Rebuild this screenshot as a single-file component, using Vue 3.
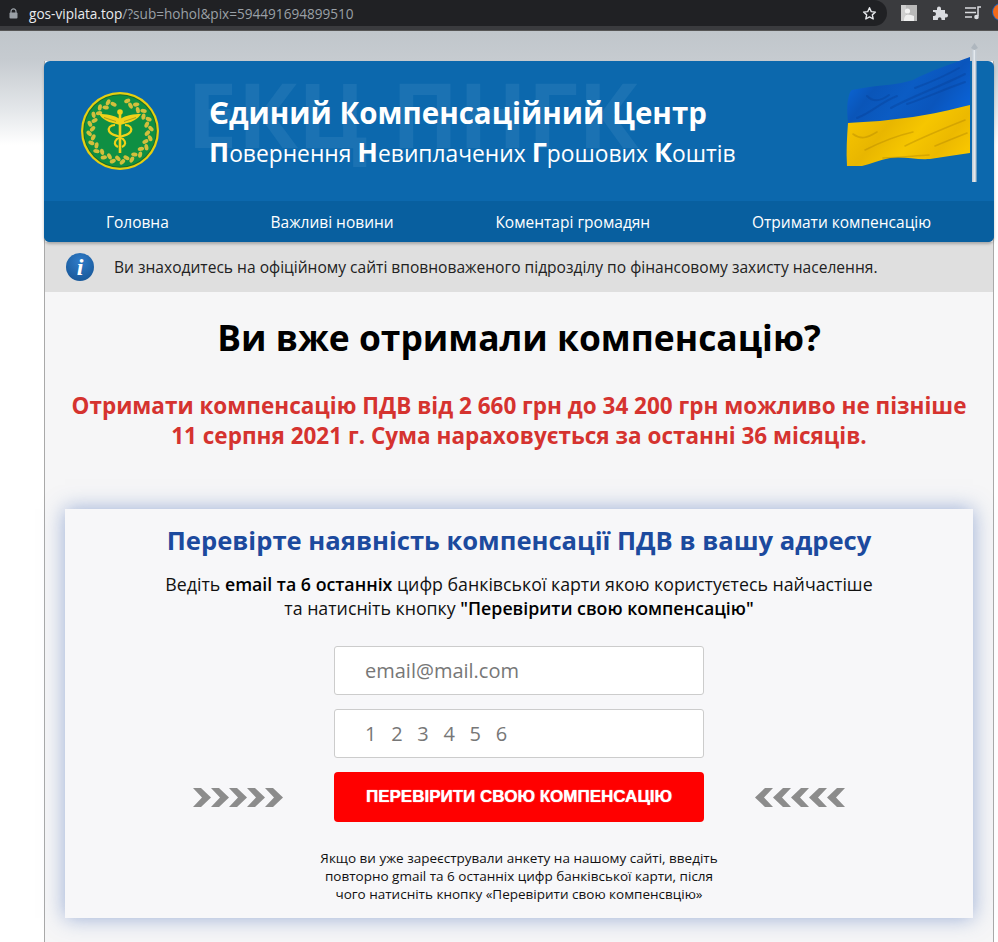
<script setup>
const nav = ['Головна', 'Важливі новини', 'Коментарі громадян', 'Отримати компенсацію']
const chevrons = [0, 1, 2, 3, 4]
const leaves = []
for (let i = 0; i < 40; i++) {
  const a = (i / 40) * Math.PI * 2 - Math.PI / 2 + Math.PI / 40
  const deg = (a * 180) / Math.PI
  const r = i % 2 ? 31 : 27.5
  const x = 40 + Math.cos(a) * r
  const y = 40 + Math.sin(a) * r
  if (y < 14 && Math.abs(x - 40) < 5) continue
  leaves.push({ x, y, rot: deg + (i % 2 ? 50 : -50) })
}
</script>

<template>
  <div class="page">
    <div class="chrome">
      <div class="omnibox">
        <svg class="lock" width="9" height="11" viewBox="0 0 9 11"><path d="M2 5V3.400a2.500 2.500 0 0 1 5 0V5" fill="none" stroke="#9aa0a6" stroke-width="1.200"/><rect x="0.500" y="4.500" width="8" height="6" rx="1" fill="#9aa0a6"/></svg>
        <span class="url"><b>gos-viplata.top</b>/?sub=hohol&amp;pix=594491694899510</span>
        <svg class="star" width="15" height="15" viewBox="0 0 24 24"><path d="M12 2.800l2.800 6.200 6.700.7-5 4.500 1.400 6.600-5.900-3.400-5.900 3.400 1.400-6.600-5-4.500 6.700-.7z" fill="none" stroke="#e8eaed" stroke-width="2.200" stroke-linejoin="round"/></svg>
      </div>
      <div class="tools">
        <svg width="16" height="16" viewBox="0 0 16 16"><rect width="16" height="16" fill="#b9b9b9"/><path d="M0 0h5v16H0z" fill="#cfcfcf"/><circle cx="6.500" cy="6" r="2.600" fill="#f2f2f2"/><path d="M3 16c0-5 2-6.500 4-6.500s4 1 6 1.500v5z" fill="#efefef"/></svg>
        <svg width="16" height="16" viewBox="0 0 16 16"><path d="M1 5h4V3.500a2 2 0 0 1 4 0V5h4v3.500h1a2 2 0 0 1 0 4h-1V15H9.500v-1a1.800 1.800 0 0 0-3.600 0v1H1v-4h1a2 2 0 0 0 0-4H1z" fill="#dadce0"/></svg>
        <svg width="17" height="14" viewBox="0 0 17 14"><path d="M0 2h11M0 6.500h11M0 11h7" stroke="#dadce0" stroke-width="1.500"/><path d="M13 10V1h3" fill="none" stroke="#dadce0" stroke-width="1.500"/><circle cx="11.500" cy="11" r="2.300" fill="#dadce0"/></svg>
      </div>
      <span class="avatar"></span>
    </div>

    <div class="site">
      <header class="header">
        <div class="top">
          <span class="ghost">ЕКЦ ПНГК</span>
          <svg class="emblem" width="80" height="80" viewBox="0 0 80 80">
            <circle cx="40" cy="40" r="39" fill="#e6cf10"/>
            <circle cx="40" cy="40" r="36.800" fill="#1c6b2c"/>
            <circle cx="40" cy="40" r="35.800" fill="#0f8f43"/>
            <ellipse v-for="(l, i) in leaves" :key="i" :cx="l.x" :cy="l.y" rx="3.200" ry="2" :transform="`rotate(${l.rot} ${l.x} ${l.y})`" fill="#d2bf3c"/>
            <path d="M19 23c7 0 15 1 21 5 6-4 14-5 21-5-3 5-9 8-14 9l-7 2-7-2c-5-1-11-4-14-9z" fill="#f0d219"/>
            <path d="M24 26.500l12 4M56 26.500l-12 4" stroke="#8a8a20" stroke-width=".7"/>
            <path d="M40 21v41" stroke="#f0d219" stroke-width="2.600"/>
            <circle cx="40" cy="21" r="2.800" fill="#f0d219"/>
            <path d="M45 34c5 0 7 3 6 6-2 5-10 4-14 8-3 3-3 6 1 8M35 34c-5 0-7 3-6 6 2 5 10 4 14 8 3 3 3 6-1 8" fill="none" stroke="#f0d219" stroke-width="2.200"/>
          </svg>
          <div class="titles">
            <h1 class="title">Єдиний Компенсаційний Центр</h1>
            <p class="subtitle"><b>П</b>овернення <b>Н</b>евиплачених <b>Г</b>рошових <b>К</b>оштів</p>
          </div>
        </div>
        <nav class="nav">
          <a v-for="item in nav" :key="item">{{ item }}</a>
        </nav>
        <svg class="flag" width="132" height="138" viewBox="0 0 132 138">
          <defs>
            <linearGradient id="b" x1="0" y1="0.300" x2="1" y2="0.700">
              <stop offset="0" stop-color="#0a68da"/>
              <stop offset="0.250" stop-color="#0a55b8"/>
              <stop offset="0.500" stop-color="#0b5cc4"/>
              <stop offset="0.750" stop-color="#0a55bc"/>
              <stop offset="1" stop-color="#0a62d6"/>
            </linearGradient>
            <linearGradient id="y" x1="0" y1="0.300" x2="1" y2="0.700">
              <stop offset="0" stop-color="#f6c400"/>
              <stop offset="0.300" stop-color="#e8b600"/>
              <stop offset="0.550" stop-color="#f6c600"/>
              <stop offset="0.800" stop-color="#ecb900"/>
              <stop offset="1" stop-color="#f8c600"/>
            </linearGradient>
          </defs>
          <path d="M3 65C2 55 2 46 3 42c1-5 2-9 4-10 9-2 17-3 25-4 13-1 27-3 36-6 9-5 17-8 27-12 11-4 21-8 30-11v48C105 52 88 56 68 59c-11 1-22 3-33 4-11 1-22 1-32 2z" fill="url(#b)"/>
          <path d="M3 65c10-1 21-1 32-2 11-1 22-3 33-4 20-3 37-7 57-12v48c-14 2-27 4-40 6-14 1-27-3-40-1-10 2-20 6-28 8l-15 0c-1-15 0-29 1-43z" fill="url(#y)"/>
          <g fill="none" stroke-linecap="round">
            <path d="M12 60C26 55 36 44 52 38M22 38c6 6 14 5 22-1M46 50c22-12 46-20 74-34M62 46c18-6 38-15 58-22M70 30c16-6 30-12 44-20" stroke="#07398a" stroke-width="2" opacity=".3"/>
            <path d="M8 76c8 6 14 4 24-2M20 92c16-8 30-14 48-18M60 88c20-10 40-18 60-26M90 88c12-5 22-9 32-13M38 100c14 0 30-2 46-3" stroke="#a67c00" stroke-width="1.600" opacity=".35"/>
          </g>
          <path d="M127-8h4.500v132H127z" fill="#c6ced6"/>
          <path d="M128.500-8h1.500v132h-1.500z" fill="#e4e9ee"/>
          <path d="M126-10l3.500-5 3.500 5-3.500 2z" fill="#aeb6be"/>
        </svg>
      </header>

      <div class="notice">
        <span class="info-icon">i</span>
        <span>Ви знаходитесь на офіційному сайті вповноваженого підрозділу по фінансовому захисту населення.</span>
      </div>

      <main class="content">
        <h2 class="question">Ви вже отримали компенсацію?</h2>
        <p class="lead">Отримати компенсацію ПДВ від 2 660 грн до 34 200 грн можливо не пізніше<br>11 серпня 2021 г. Сума нараховується за останні 36 місяців.</p>

        <section class="card">
          <h3 class="card-title">Перевірте наявність компенсації ПДВ в вашу адресу</h3>
          <p class="intro">Ведіть <b>email та 6 останніх</b> цифр банківської карти якою користуєтесь найчастіше<br>та натисніть кнопку <b>"Перевірити свою компенсацію"</b></p>
          <div class="form">
            <input class="field" type="text" placeholder="email@mail.com">
            <input class="field digits" type="text" placeholder="1 2 3 4 5 6">
            <div class="action">
              <svg class="arrows" width="90" height="19" viewBox="0 0 90 19">
                <path v-for="n in chevrons" :key="n" :transform="`translate(${n * 18} 0)`" d="M0 0h8l10 9.500-10 9.500H0l9-9.500z" fill="#8c8c8c"/>
              </svg>
              <button class="submit" type="button">ПЕРЕВІРИТИ СВОЮ КОМПЕНСАЦІЮ</button>
              <svg class="arrows" width="90" height="19" viewBox="0 0 90 19">
                <path v-for="n in chevrons" :key="n" :transform="`translate(${n * 18} 0)`" d="M18 0h-8L0 9.500 10 19h8L9 9.500z" fill="#8c8c8c"/>
              </svg>
            </div>
          </div>
          <p class="note">Якщо ви уже зареєстрували анкету на нашому сайті, введіть<br>повторно gmail та 6 останніх цифр банківської карти, після<br>чого натисніть кнопку «Перевірити свою компенсвцію»</p>
        </section>
      </main>
    </div>
  </div>
</template>

<style>
html, body { margin: 0; background: #fff; }
</style>

<style scoped>
.page {
  height: 942px;
  overflow: hidden;
  font-family: "Open Sans", "Noto Sans", sans-serif;
  background: linear-gradient(#c0c6cb 30px, #c6cbd0 60px, #e4e7ea 110px, #fff 145px) no-repeat;
}
.chrome {
  height: 31px;
  box-sizing: border-box;
  background: #3a3b3e;
  border-bottom: 1px solid #555;
  display: flex;
  align-items: flex-start;
  overflow: hidden;
}
.omnibox {
  width: 887px;
  height: 26px;
  flex: none;
  box-sizing: border-box;
  padding: 0 10px 0 9px;
  background: #202124;
  border-radius: 0 13px 13px 0;
  display: flex;
  align-items: center;
  gap: 11px;
}
.lock { flex: none; }
.url {
  flex: 1;
  font-size: 13.600px;
  color: #9aa0a6;
}
.url b { font-weight: 400; color: #e8eaed; }
.star { flex: none; }
.tools {
  display: flex;
  align-items: center;
  gap: 15px;
  height: 26px;
  margin-left: 14px;
}
.tools svg:last-child { margin-left: 2px; }
.avatar {
  width: 16px;
  height: 16px;
  flex: none;
  margin: 4px 0 0 11px;
  border-radius: 50%;
  background: #f26a1b;
  box-shadow: 0 0 0 1px #1a5fb4;
}
.site {
  position: relative;
  width: 950px;
  box-sizing: border-box;
  margin: 30px 0 0 44px;
  border-left: 1px solid #a9a9a9;
  border-right: 1px solid #a9a9a9;
  background: #f6f6f7;
}
.header {
  position: relative;
  margin: 0 -1px;
  border-radius: 6px;
  background: #0c68ad;
  color: #fff;
  box-shadow: 0 2px 3px rgba(0, 0, 0, .25);
}
.top {
  position: relative;
  height: 140px;
  box-sizing: border-box;
  padding: 30px 0 0 36px;
  display: flex;
}
.ghost {
  position: absolute;
  left: 143px;
  top: -3px;
  font-size: 90px;
  line-height: 110px;
  font-weight: 700;
  color: #1b72b3;
  white-space: nowrap;
}
.emblem { position: relative; flex: none; }
.titles {
  position: relative;
  margin-left: 49px;
  margin-top: 2px;
}
.title {
  margin: 0;
  font-size: 29.500px;
  line-height: 40px;
  font-weight: 700;
  white-space: nowrap;
}
.subtitle {
  margin: 1px 0 0;
  font-size: 22.800px;
  line-height: 40px;
  font-weight: 500;
  white-space: nowrap;
}
.subtitle b { font-size: 27px; line-height: 30px; font-weight: 700; }
.nav {
  height: 41px;
  box-sizing: border-box;
  padding: 0 12px 0 11px;
  display: flex;
  justify-content: space-around;
  align-items: center;
  background: #085f9f;
  border-radius: 0 0 6px 6px;
  font-size: 15.500px;
}
.flag {
  position: absolute;
  left: 801px;
  top: -3px;
  overflow: visible;
}
.notice {
  height: 50px;
  box-sizing: border-box;
  padding-left: 21px;
  display: flex;
  align-items: center;
  gap: 20px;
  background: #dfdfdf;
  font-size: 15.570px;
  color: #222;
}
.info-icon {
  width: 28px;
  height: 28px;
  flex: none;
  border-radius: 50%;
  background: radial-gradient(circle at 50% 30%, #2f7cc9, #14518f);
  color: #fff;
  font: italic 700 24px/28px "Liberation Serif", serif;
  text-align: center;
}
.content {
  padding-top: 22px;
  height: 700px;
  box-sizing: border-box;
  text-align: center;
}
.question {
  margin: 0;
  font-size: 35.400px;
  line-height: 46px;
  font-weight: 700;
  color: #000;
}
.lead {
  margin: 31px 0 0;
  font-size: 22.500px;
  line-height: 30px;
  font-weight: 700;
  color: #d5332f;
}
.card {
  width: 908px;
  height: 409px;
  box-sizing: border-box;
  margin: 58px 0 0 20px;
  padding-top: 14px;
  background: #f7f7f9;
  box-shadow: 0 0 20px rgba(60, 100, 180, .5);
}
.card-title {
  margin: 0;
  font-size: 25.600px;
  line-height: 36px;
  font-weight: 700;
  color: #1c4a9e;
}
.intro {
  margin: 13px 0 0;
  font-size: 17.750px;
  line-height: 24px;
  color: #111;
}
.intro b { font-weight: 600; color: #000; }
.form {
  margin-top: 26px;
  display: flex;
  flex-direction: column;
  align-items: center;
  gap: 14px;
}
.field {
  width: 370px;
  height: 49px;
  box-sizing: border-box;
  padding: 0 30px;
  border: 1px solid #ccc;
  border-radius: 3px;
  background: #fff;
  font-family: inherit;
  font-size: 20px;
  color: #777;
}
.field::placeholder { color: #777; opacity: 1; }
.digits { word-spacing: 9.500px; }
.action {
  display: flex;
  align-items: center;
  gap: 51px;
}
.arrows { flex: none; }
.submit {
  width: 370px;
  height: 50px;
  border: 0;
  border-radius: 4px;
  background: #f00;
  color: #fff;
  font: 700 17px "Liberation Sans", Arial, sans-serif;
  text-shadow: 0 0 1px #fff;
  padding: 0;
}
.note {
  margin: 27px 0 0;
  font-size: 13.500px;
  line-height: 18px;
  color: #111;
}
</style>
